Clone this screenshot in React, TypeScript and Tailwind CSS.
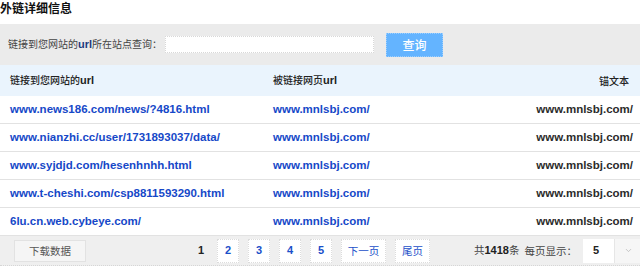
import { ChevronDown } from "lucide-react";

const rows = [
  "www.news186.com/news/?4816.html",
  "www.nianzhi.cc/user/1731893037/data/",
  "www.syjdjd.com/hesenhnhh.html",
  "www.t-cheshi.com/csp8811593290.html",
  "6lu.cn.web.cybeye.com/",
];

const cjk = "font-['Noto_Sans_CJK_SC',sans-serif]";
const latin = "font-['Liberation_Sans','Noto_Sans_CJK_SC',sans-serif]";

function PageBtn({ children, wide }: { children: React.ReactNode; wide?: string }) {
  return (
    <span
      className={`flex h-[24px] shrink-0 items-center justify-center border border-dotted border-[#dcdcdc] bg-white text-[#1a4fc9] ${
        wide ?? "w-[22px]"
      }`}
    >
      {children}
    </span>
  );
}

export default function App() {
  return (
    <div className={`w-[640px] h-[266px] overflow-hidden bg-white text-[#333] ${latin}`}>
      <div className={`h-[24px] text-[12px] font-bold leading-[16px] text-[#111] ${cjk}`}>外链详细信息</div>

      {/* search bar */}
      <div className="flex h-[41px] items-center bg-[#ebebeb] pl-[8px]">
        <span className={`whitespace-nowrap text-[10px] text-[#444] ${cjk}`}>
          链接到您网站的<b className="font-['Liberation_Sans',sans-serif] text-[11px] text-[#1d3a80]">url</b>所在站点查询：
        </span>
        <input className="ml-[3px] h-[17px] w-[209px] border border-dotted border-[#d8d8d8] bg-white outline-none" />
        <button
          className={`ml-[12px] h-[24px] w-[57px] border border-dotted border-[#9ccfff] bg-[#64b4ff] text-[12px] font-medium text-white ${cjk}`}
        >
          查询
        </button>
      </div>

      {/* table header */}
      <div className={`grid h-[31px] grid-cols-[263px_1fr_auto] items-center bg-[#eaf4fd] pl-[10px] pr-[11px] text-[10px] text-[#222] ${cjk}`}>
        <span className="font-medium">
          链接到您网站的<b className="font-['Liberation_Sans',sans-serif] text-[11px]">url</b>
        </span>
        <span className="font-medium">
          被链接网页<b className="font-['Liberation_Sans',sans-serif] text-[11px]">url</b>
        </span>
        <span className="font-medium">锚文本</span>
      </div>

      {rows.map((url) => (
        <div
          key={url}
          className="grid h-[28px] grid-cols-[263px_1fr_auto] items-center border-b border-[#e2e2e2] pl-[10px] pr-[7px] text-[11.5px] font-bold"
        >
          <span className="text-[#1648c8]">{url}</span>
          <span className="text-[#1648c8]">www.mnlsbj.com/</span>
          <span className="text-[#2b2b2b]">www.mnlsbj.com/</span>
        </div>
      ))}

      {/* footer */}
      <div className="flex h-[30px] items-center whitespace-nowrap border-b border-dotted border-[#d6d6d6] bg-[#efefef] pl-[14px] text-[11px]">
        <span
          className={`flex h-[22px] w-[72px] shrink-0 items-center justify-center border border-[#e2e2e2] bg-[#f5f5f5] text-[10.5px] text-[#555] ${cjk}`}
        >
          下载数据
        </span>
        <div className="ml-[100px] flex shrink-0 items-center gap-[9px] font-bold">
          <span className="flex h-[24px] w-[22px] items-center justify-center pl-[8px] text-[#222]">1</span>
          <PageBtn>2</PageBtn>
          <PageBtn>3</PageBtn>
          <PageBtn>4</PageBtn>
          <PageBtn>5</PageBtn>
          <span className={`text-[10.5px] font-normal ${cjk}`}>
            <PageBtn wide="w-[45px]">下一页</PageBtn>
          </span>
          <span className={`text-[10.5px] font-normal ${cjk}`}>
            <PageBtn wide="w-[35px]">尾页</PageBtn>
          </span>
        </div>
        <span className={`ml-[44px] shrink-0 text-[10.5px] text-[#444] ${cjk}`}>
          共<b className="font-['Liberation_Sans',sans-serif] text-[11px] text-[#222]">1418</b>条
        </span>
        <span className={`ml-[5px] shrink-0 text-[10.5px] text-[#444] ${cjk}`}>每页显示：</span>
        <div className="ml-[6px] flex h-[24px] shrink-0">
          <span className="flex w-[31px] items-center bg-white pl-[10px] font-bold text-[#222]">5</span>
          <span className="flex w-[29px] items-center justify-center border-l border-[#e6e6e6] bg-[#f6f6f6]">
            <ChevronDown size={9} strokeWidth={2} className="text-[#b5b5b5]" />
          </span>
        </div>
      </div>
    </div>
  );
}
